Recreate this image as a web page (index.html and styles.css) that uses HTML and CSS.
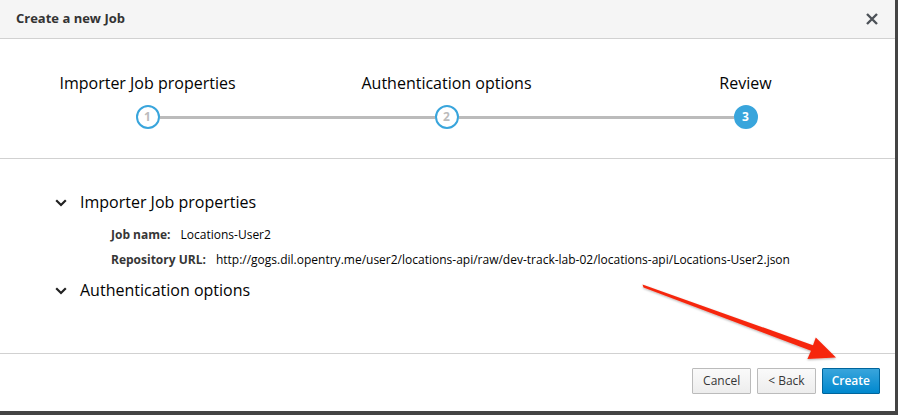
FILE: index.html
```html
<!DOCTYPE html>
<html>
<head>
<meta charset="utf-8">
<link rel="stylesheet" href="styles.css">
</head>
<body>
<div class="modal">
  <div class="modal-header">
    <h4 class="modal-title">Create a new Job</h4>
    <button class="close" aria-label="Close">
      <svg width="12" height="12" viewBox="0 0 12 12"><path d="M1 1 L11 11 M11 1 L1 11" stroke="#4d5258" stroke-width="2.4" stroke-linecap="butt"/></svg>
    </button>
  </div>
  <div class="steps">
    <div class="step first">
      <div class="step-label">Importer Job properties</div>
      <div class="step-track"><span class="seg"></span><span class="circle">1</span><span class="seg"></span></div>
    </div>
    <div class="step">
      <div class="step-label">Authentication options</div>
      <div class="step-track"><span class="seg"></span><span class="circle">2</span><span class="seg"></span></div>
    </div>
    <div class="step last">
      <div class="step-label">Review</div>
      <div class="step-track"><span class="seg"></span><span class="circle active">3</span><span class="seg"></span></div>
    </div>
  </div>
  <div class="modal-body">
    <div class="section">
      <div class="section-head">
        <svg class="chev" width="12" height="8" viewBox="0 0 12 8"><path d="M1.2 1.2 L6 6 L10.8 1.2" fill="none" stroke="#222" stroke-width="2.2"/></svg>
        <span>Importer Job properties</span>
      </div>
      <div class="detail"><span class="dl">Job name:</span><span class="dv">Locations-User2</span></div>
      <div class="detail"><span class="dl">Repository URL:</span><span class="dv">http://gogs.dil.opentry.me/user2/locations-api/raw/dev-track-lab-02/locations-api/Locations-User2.json</span></div>
    </div>
    <div class="section">
      <div class="section-head">
        <svg class="chev" width="12" height="8" viewBox="0 0 12 8"><path d="M1.2 1.2 L6 6 L10.8 1.2" fill="none" stroke="#222" stroke-width="2.2"/></svg>
        <span>Authentication options</span>
      </div>
    </div>
  </div>
  <div class="modal-footer">
    <button class="btn">Cancel</button>
    <button class="btn">&lt; Back</button>
    <button class="btn primary">Create</button>
  </div>
</div>
<svg class="arrow" width="898" height="415" viewBox="0 0 898 415">
  <defs>
    <filter id="sh" x="-10%" y="-10%" width="120%" height="130%">
      <feDropShadow dx="0" dy="1" stdDeviation="1" flood-color="#000" flood-opacity="0.3"/>
    </filter>
  </defs>
  <polygon filter="url(#sh)" fill="#f6280f" points="642.5,284.4 813,345.2 815.8,337.6 836,357.5 807.4,359 811,350.8 643.5,287.6"/>
</svg>
</body>
</html>
```
FILE: styles.css
```css
html, body {
  margin: 0;
  padding: 0;
}
body {
  width: 898px;
  height: 415px;
  background: #444;
  font-family: "Open Sans", "Noto Sans", sans-serif;
  overflow: hidden;
  position: relative;
}
.modal {
  width: 895px;
  height: 411px;
  background: #fff;
  display: flex;
  flex-direction: column;
  box-sizing: border-box;
  overflow: hidden;
}
.modal-header {
  height: 39px;
  box-sizing: border-box;
  background: #f5f5f5;
  border-bottom: 1px solid #d1d1d1;
  display: flex;
  align-items: center;
  justify-content: space-between;
  padding: 0 17px 0 16px;
}
.modal-title {
  margin: 0;
  font-size: 13px;
  font-weight: 700;
  color: #333;
  line-height: 18px;
  padding-bottom: 2px;
}
.close {
  border: 0;
  background: none;
  padding: 0;
  width: 12px;
  height: 12px;
  display: flex;
  margin-bottom: 1px;
}
.steps {
  height: 120px;
  box-sizing: border-box;
  border-bottom: 1px solid #d1d1d1;
  display: grid;
  grid-template-columns: repeat(3, 299px);
  margin-left: -2px;
  padding: 33px 0 0 0;
}
.step {
  display: flex;
  flex-direction: column;
  align-items: stretch;
}
.step-label {
  text-align: center;
  font-size: 16px;
  line-height: 22px;
  color: #030303;
  height: 22px;
}
.step-track {
  display: flex;
  align-items: center;
  margin-top: 11px;
}
.seg {
  flex: 1;
  height: 3px;
  background: #bbb;
}
.first .seg:first-child,
.last .seg:last-child {
  background: transparent;
}
.circle {
  width: 24px;
  height: 24px;
  box-sizing: border-box;
  border: 2px solid #39a5dc;
  border-radius: 50%;
  display: flex;
  align-items: center;
  justify-content: center;
  font-size: 12px;
  font-weight: 700;
  color: #bbb;
  background: #fff;
  line-height: 1;
}
.circle.active {
  background: #39a5dc;
  color: #fff;
}
.modal-body {
  flex: 1;
  border-bottom: 1px solid #d1d1d1;
  padding: 31px 0 0 55px;
}
.section-head {
  display: flex;
  align-items: center;
  font-size: 16px;
  line-height: 24px;
  color: #030303;
  height: 24px;
}
.chev {
  margin-right: 13px;
  margin-top: 1px;
}
.section + .section {
  margin-top: 10px;
}
.detail {
  font-size: 12px;
  color: #030303;
  line-height: 17px;
  padding-left: 56px;
  margin-top: 8px;
}
.section-head + .detail {
  margin-top: 12px;
}
.dl {
  font-weight: 700;
  color: #363636;
  margin-right: 10px;
}
.modal-footer {
  height: 57px;
  box-sizing: border-box;
  display: flex;
  justify-content: flex-end;
  align-items: flex-start;
  padding: 14px 15px 0 0;
  gap: 6px;
}
.btn {
  height: 26px;
  box-sizing: border-box;
  font-family: "Open Sans", "Noto Sans", sans-serif;
  font-size: 12px;
  color: #363636;
  border: 1px solid #bbb;
  border-radius: 1px;
  background: linear-gradient(#fafafa, #ededed);
  padding: 0 10px;
  line-height: 24px;
}
.btn.primary {
  background: linear-gradient(#39a5dc, #0088ce);
  border-color: #00659c;
  color: #fff;
  font-weight: 600;
  padding: 0 9px;
}
.arrow {
  position: absolute;
  left: 0;
  top: 0;
  pointer-events: none;
}
```
